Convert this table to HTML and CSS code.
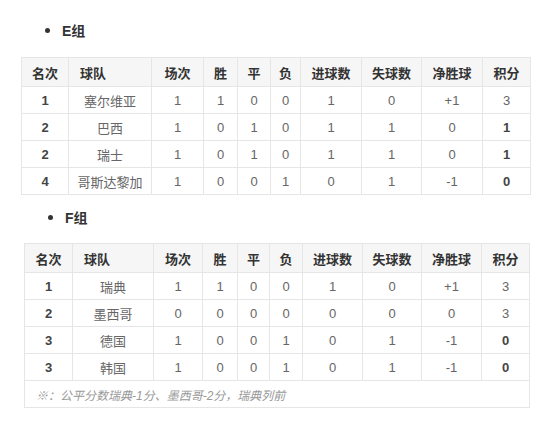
FILE: index.html
```html
<!DOCTYPE html>
<html lang="zh">
<head>
<meta charset="utf-8">
<link rel="stylesheet" href="styles.css">
</head>
<body>
<div class="page">
  <div class="group group-e">
    <div class="heading"><span class="dot"></span><span class="title">E组</span></div>
    <table class="standings">
      <colgroup>
        <col style="width:47px"><col style="width:83px"><col style="width:52px"><col style="width:34px"><col style="width:33px"><col style="width:30px"><col style="width:61px"><col style="width:60px"><col style="width:61px"><col style="width:48px">
      </colgroup>
      <thead>
        <tr><th>名次</th><th class="team-h">球队</th><th>场次</th><th>胜</th><th>平</th><th>负</th><th>进球数</th><th>失球数</th><th>净胜球</th><th>积分</th></tr>
      </thead>
      <tbody>
        <tr><td class="b">1</td><td>塞尔维亚</td><td>1</td><td>1</td><td>0</td><td>0</td><td>1</td><td>0</td><td>+1</td><td>3</td></tr>
        <tr><td class="b">2</td><td>巴西</td><td>1</td><td>0</td><td>1</td><td>0</td><td>1</td><td>1</td><td>0</td><td class="b">1</td></tr>
        <tr><td class="b">2</td><td>瑞士</td><td>1</td><td>0</td><td>1</td><td>0</td><td>1</td><td>1</td><td>0</td><td class="b">1</td></tr>
        <tr><td class="b">4</td><td>哥斯达黎加</td><td>1</td><td>0</td><td>0</td><td>1</td><td>0</td><td>1</td><td>-1</td><td class="b">0</td></tr>
      </tbody>
    </table>
  </div>
  <div class="group group-f">
    <div class="heading"><span class="dot"></span><span class="title">F组</span></div>
    <table class="standings">
      <colgroup>
        <col style="width:48px"><col style="width:81px"><col style="width:49px"><col style="width:35px"><col style="width:32px"><col style="width:33px"><col style="width:60px"><col style="width:59px"><col style="width:60px"><col style="width:48px">
      </colgroup>
      <thead>
        <tr><th>名次</th><th class="team-h">球队</th><th>场次</th><th>胜</th><th>平</th><th>负</th><th>进球数</th><th>失球数</th><th>净胜球</th><th>积分</th></tr>
      </thead>
      <tbody>
        <tr><td class="b">1</td><td>瑞典</td><td>1</td><td>1</td><td>0</td><td>0</td><td>1</td><td>0</td><td>+1</td><td>3</td></tr>
        <tr><td class="b">2</td><td>墨西哥</td><td>0</td><td>0</td><td>0</td><td>0</td><td>0</td><td>0</td><td>0</td><td>3</td></tr>
        <tr><td class="b">3</td><td>德国</td><td>1</td><td>0</td><td>0</td><td>1</td><td>0</td><td>1</td><td>-1</td><td class="b">0</td></tr>
        <tr><td class="b">3</td><td>韩国</td><td>1</td><td>0</td><td>0</td><td>1</td><td>0</td><td>1</td><td>-1</td><td class="b">0</td></tr>
        <tr class="note-row"><td colspan="10" class="note">※：公平分数瑞典-1分、墨西哥-2分，瑞典列前</td></tr>
      </tbody>
    </table>
  </div>
</div>
</body>
</html>
```
FILE: styles.css
```css
html, body {
  margin: 0;
  padding: 0;
  background: #ffffff;
}
body {
  font-family: "Liberation Sans", "Noto Sans CJK SC", sans-serif;
  color: #555;
}
.page {
  width: 552px;
  height: 430px;
  padding-top: 20px;
  box-sizing: border-box;
}
.heading {
  display: flex;
  align-items: center;
  height: 20px;
}
.dot {
  width: 5px;
  height: 5px;
  border-radius: 50%;
  background: #333;
  margin-right: 12px;
}
.title {
  font-size: 14px;
  font-weight: bold;
  color: #333;
}
.group-e .heading { padding-left: 45px; }
.group-e .standings { margin-left: 21px; margin-top: 17px; width: 509px; }
.group-f { margin-top: 12px; }
.group-f .heading { padding-left: 48px; }
.group-f .standings { margin-left: 24px; margin-top: 16px; width: 505px; }
.standings {
  border-collapse: collapse;
  table-layout: fixed;
  font-size: 13px;
}
.standings th,
.standings td {
  border: 1px solid #e6e6e6;
  text-align: center;
  padding: 0;
  white-space: nowrap;
  overflow: hidden;
}
.standings th {
  height: 28px;
  background: #f6f6f6;
  color: #333;
  font-size: 13px;
  font-weight: bold;
}
.standings th.team-h {
  text-align: left;
  padding-left: 11px;
}
.standings td {
  height: 26px;
  color: #666;
}
.standings td.b {
  font-weight: bold;
  color: #444;
}
.standings td.note {
  text-align: left;
  padding-left: 11px;
  font-style: italic;
  color: #999;
  font-size: 12px;
}
```
